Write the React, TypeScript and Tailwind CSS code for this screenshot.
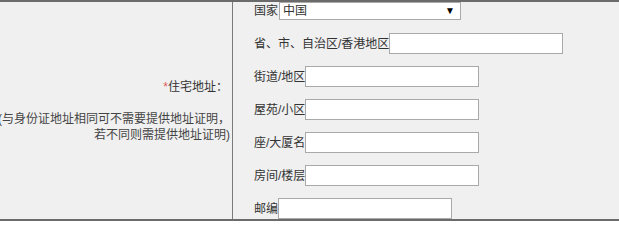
const fieldRows = [
  { label: '省、市、自治区/香港地区' },
  { label: '街道/地区' },
  { label: '屋苑/小区' },
  { label: '座/大厦名' },
  { label: '房间/楼层' },
  { label: '邮编' },
];

export default function App() {
  return (
    <div
      className="w-[619px] h-[221px] bg-[#f0f0f0] text-[12px] leading-[16px] text-[#333] overflow-hidden"
      style={{ fontFamily: '"Liberation Sans", "Noto Sans CJK SC", sans-serif' }}
    >
      <div className="flex h-full border-t-2 border-b-2 border-[#6b6b6b]">
        <div className="w-[233px] shrink-0 flex items-center justify-end pr-[2px] text-right border-r border-[#7a7a7a]">
          <div className="whitespace-nowrap">
            <div className="pr-[2px]">
              <span className="text-[#e35b5b]">*</span>住宅地址：
            </div>
            <div>&nbsp;</div>
            <div className="text-[#444]">(与身份证地址相同可不需要提供地址证明，</div>
            <div className="text-[#444]">若不同则需提供地址证明)</div>
          </div>
        </div>

        <div className="flex-1 pl-[21px]">
          <div className="flex items-center h-[18px]">
            <span>国家</span>
            <div className="ml-px flex items-center justify-between w-[182px] h-[18px] bg-white border border-[#a9a9a9] pl-[3px] pr-[5px]">
              <span>中国</span>
              <span className="text-[10px] leading-none text-black">▼</span>
            </div>
          </div>

          {fieldRows.map((row, i) => (
            <div key={row.label} className={`flex items-center ${i === 0 ? 'mt-[13px]' : 'mt-3'}`}>
              <span>{row.label}</span>
              <input
                type="text"
                className="w-[174px] h-[21px] bg-white border border-[#a9a9a9] outline-none"
              />
            </div>
          ))}
        </div>
      </div>
    </div>
  );
}
